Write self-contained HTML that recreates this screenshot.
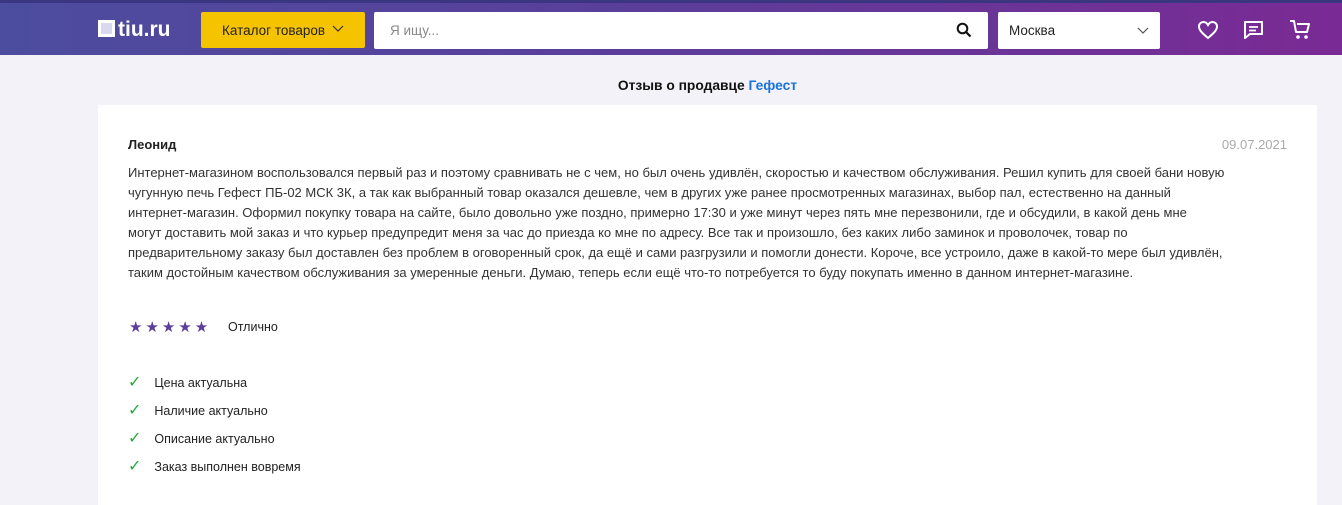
<!DOCTYPE html>
<html><head><meta charset="utf-8"><style>
*{margin:0;padding:0;box-sizing:border-box}
body{width:1342px;height:493px;overflow:hidden;background:#f3f2f8;font-family:"Liberation Sans","DejaVu Sans",sans-serif;color:#222}
.hdr{position:absolute;left:0;top:0;width:1342px;height:55px;background:linear-gradient(90deg,#4c4d9e 0%,#5a3f9a 45%,#7a2a94 100%);border-top:3px solid #3b3680}
.logo{position:absolute;left:98px;top:19px;color:#fff;font-weight:bold;font-size:21px;line-height:22px}
.logo i{display:inline-block;width:17px;height:17px;border:3px solid #fff;background:#d8d8ee;vertical-align:-1px;margin-right:3px}
.cat{position:absolute;left:201px;top:12px;width:164px;height:36px;background:#f5c300;border-radius:2px;font-size:13.5px;line-height:37px;padding-left:21px;color:#222}
.search{position:absolute;left:374px;top:12px;width:614px;height:37px;background:#fff;border-radius:2px;font-size:13.5px;line-height:37px;padding-left:16px;color:#888}
.city{position:absolute;left:998px;top:12px;width:162px;height:37px;background:#fff;border-radius:2px;font-size:13.5px;line-height:38px;padding-left:11px;color:#222}
svg{position:absolute}
.title{position:absolute;top:78px;left:98px;width:1219px;text-align:center;font-weight:bold;font-size:13.8px;color:#111}
.title span{color:#1a73d9}
.card{position:absolute;left:98px;top:105px;width:1219px;height:400px;background:#fff}
.name{position:absolute;left:30px;top:32px;font-weight:bold;font-size:13px}
.date{position:absolute;right:30px;top:32px;font-size:13px;color:#aaa}
.txt{position:absolute;left:30px;top:58px;width:1180px;font-size:13px;line-height:20px;color:#333;white-space:nowrap}
.stars{position:absolute;left:31px;top:213px;font-size:15px;letter-spacing:3px;color:#5a3e9c}
.rt{position:absolute;left:130px;top:215px;font-size:12.5px}
.chk{position:absolute;left:30px;font-size:12.5px}
.chk b{color:#22aa3a;font-weight:bold;font-size:16px;margin-right:13px}
</style></head><body>
<div class="hdr"></div>
<div class="logo"><i></i>tiu.ru</div>
<div class="cat">Каталог товаров</div>
<svg style="left:332px;top:25px" width="12" height="8"><path d="M1 1l5 5 5-5" stroke="#333" fill="none" stroke-width="1.2"/></svg>
<div class="search">Я ищу...</div>
<svg style="left:956px;top:22px" width="16" height="16"><circle cx="6.5" cy="6.5" r="4.8" stroke="#111" stroke-width="2" fill="none"/><path d="M10 10l4.5 4.5" stroke="#111" stroke-width="2.2"/></svg>
<div class="city">Москва</div>
<svg style="left:1137px;top:27px" width="12" height="8"><path d="M1 1l5 5 5-5" stroke="#555" fill="none" stroke-width="1.2"/></svg>
<svg style="left:1197px;top:20px" width="22" height="20"><path d="M11 18C5 13 2 10 2 6.5 2 3.5 4.3 2 6.5 2 8.5 2 10 3.3 11 5 12 3.3 13.5 2 15.5 2 17.7 2 20 3.5 20 6.5 20 10 17 13 11 18z" stroke="#fff" stroke-width="2" fill="none"/></svg>
<svg style="left:1243px;top:20px" width="22" height="20"><path d="M2 2h17v12H7l-5 4z" stroke="#fff" stroke-width="2" fill="none" stroke-linejoin="round"/><path d="M6 7h9M6 10.5h7" stroke="#fff" stroke-width="1.8"/></svg>
<svg style="left:1289px;top:19px" width="24" height="22"><path d="M1 2h4l2 11h11l2-8H8" stroke="#fff" stroke-width="2" fill="none" stroke-linejoin="round"/><circle cx="9" cy="18" r="1.8" fill="#fff"/><circle cx="17" cy="18" r="1.8" fill="#fff"/></svg>
<div class="title">Отзыв о продавце <span>Гефест</span></div>
<div class="card">
<div class="name">Леонид</div>
<div class="date">09.07.2021</div>
<div class="txt">Интернет-магазином воспользовался первый раз и поэтому сравнивать не с чем, но был очень удивлён, скоростью и качеством обслуживания. Решил купить для своей бани новую<br>чугунную печь Гефест ПБ-02 МСК 3К, а так как выбранный товар оказался дешевле, чем в других уже ранее просмотренных магазинах, выбор пал, естественно на данный<br>интернет-магазин. Оформил покупку товара на сайте, было довольно уже поздно, примерно 17:30 и уже минут через пять мне перезвонили, где и обсудили, в какой день мне<br>могут доставить мой заказ и что курьер предупредит меня за час до приезда ко мне по адресу. Все так и произошло, без каких либо заминок и проволочек, товар по<br>предварительному заказу был доставлен без проблем в оговоренный срок, да ещё и сами разгрузили и помогли донести. Короче, все устроило, даже в какой-то мере был удивлён,<br>таким достойным качеством обслуживания за умеренные деньги. Думаю, теперь если ещё что-то потребуется то буду покупать именно в данном интернет-магазине.</div>
<div class="stars">★★★★★</div>
<div class="rt">Отлично</div>
<div class="chk" style="top:267px"><b>✓</b>Цена актуальна</div>
<div class="chk" style="top:295px"><b>✓</b>Наличие актуально</div>
<div class="chk" style="top:323px"><b>✓</b>Описание актуально</div>
<div class="chk" style="top:351px"><b>✓</b>Заказ выполнен вовремя</div>
</div>
</body></html>
